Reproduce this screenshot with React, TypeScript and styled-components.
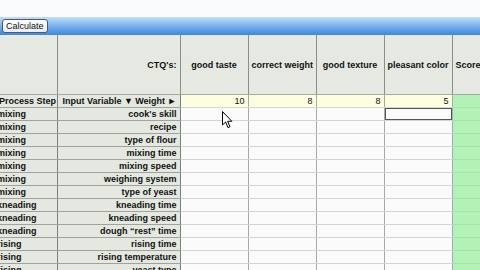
import React from "react";
import styled, { createGlobalStyle } from "styled-components";

const GlobalStyle = createGlobalStyle`
  html, body {
    margin: 0;
    padding: 0;
    width: 480px;
    height: 270px;
    overflow: hidden;
    background: #fafbfd;
    font-family: "Liberation Sans", Arial, sans-serif;
  }
`;

const ctqs = [
  { name: "good taste", weight: 10 },
  { name: "correct weight", weight: 8 },
  { name: "good texture", weight: 8 },
  { name: "pleasant color", weight: 5 },
];

const rows = [
  ["mixing", "cook's skill"],
  ["mixing", "recipe"],
  ["mixing", "type of flour"],
  ["mixing", "mixing time"],
  ["mixing", "mixing speed"],
  ["mixing", "weighing system"],
  ["mixing", "type of yeast"],
  ["kneading", "kneading time"],
  ["kneading", "kneading speed"],
  ["kneading", "dough \u201crest\u201d time"],
  ["rising", "rising time"],
  ["rising", "rising temperature"],
  ["rising", "yeast type"],
];

const Page = styled.div`
  position: relative;
  width: 480px;
  height: 270px;
  overflow: hidden;
`;

const TopBlank = styled.div`
  height: 17px;
  background: #fafbfd;
`;

const Toolbar = styled.div`
  height: 18px;
  display: flex;
  align-items: center;
  padding-left: 2px;
  background: linear-gradient(#c4def8 0%, #7fb5ee 45%, #3a88de 100%);
`;

const CalcButton = styled.button`
  height: 14px;
  padding: 0 3px;
  margin: 0;
  font-family: "Liberation Sans", Arial, sans-serif;
  font-size: 9px;
  line-height: 12px;
  color: #111;
  background: linear-gradient(#ffffff, #e8ecf2);
  border: 1px solid #4a5a72;
  border-radius: 3px;
`;

const Sheet = styled.table`
  margin-left: -4px;
  border-collapse: collapse;
  table-layout: fixed;
  width: 520px;
  font-size: 9px;
  font-weight: bold;
  color: #111;
`;

const HeadCell = styled.th<{ $align?: string }>`
  height: 59px;
  padding: 0 3px;
  background: #e6e9e2;
  border-right: 1px solid #8a8f88;
  border-bottom: 1px solid #a6aaa2;
  text-align: ${(p) => p.$align || "center"};
  vertical-align: middle;
  font-weight: bold;
  white-space: nowrap;
  overflow: hidden;
`;

const LabelCell = styled.td<{ $align?: string; $indent?: number }>`
  height: 12px;
  padding: 0 3px 0 ${(p) => p.$indent ?? 3}px;
  background: #e4e8e0;
  border-right: 1px solid #7c807a;
  border-bottom: 1px solid #9ea39b;
  text-align: ${(p) => p.$align || "right"};
  white-space: nowrap;
  overflow: hidden;
  line-height: 12px;
`;

const SplitLabel = styled.div`
  display: flex;
  justify-content: space-between;
  padding-left: 2px;
`;

const WeightCell = styled.td`
  height: 12px;
  padding: 0 3px;
  background: #fdfde2;
  border-right: 1px solid #a8aaa4;
  border-bottom: 1px solid #d6d8cc;
  text-align: right;
  font-weight: normal;
  line-height: 12px;
`;

const DataCell = styled.td<{ $focused?: boolean }>`
  height: 12px;
  padding: 0;
  background: #fbfbfb;
  border-right: 1px solid #a8aaa8;
  border-bottom: 1px solid #d4d6d4;
  box-shadow: ${(p) => (p.$focused ? "inset 0 0 0 1px #555" : "none")};
`;

const ScoreCell = styled.td`
  height: 12px;
  padding: 0;
  background: #b3f2b6;
  border-bottom: 1px solid #a8e0aa;
`;

const Cursor = styled.svg`
  position: absolute;
  left: 222px;
  top: 111px;
`;

export default function App() {
  return (
    <Page>
      <GlobalStyle />
      <TopBlank />
      <Toolbar>
        <CalcButton>Calculate</CalcButton>
      </Toolbar>
      <Sheet>
        <colgroup>
          <col style={{ width: 61 }} />
          <col style={{ width: 123 }} />
          {ctqs.map((c) => (
            <col key={c.name} style={{ width: 68 }} />
          ))}
          <col style={{ width: 64 }} />
        </colgroup>
        <thead>
          <tr>
            <HeadCell />
            <HeadCell $align="right">CTQ's:</HeadCell>
            {ctqs.map((c) => (
              <HeadCell key={c.name}>{c.name}</HeadCell>
            ))}
            <HeadCell $align="left">Score</HeadCell>
          </tr>
        </thead>
        <tbody>
          <tr>
            <LabelCell $align="left">Process Step</LabelCell>
            <LabelCell>
              <SplitLabel>
                <span>Input Variable ▼</span>
                <span>Weight ►</span>
              </SplitLabel>
            </LabelCell>
            {ctqs.map((c) => (
              <WeightCell key={c.name}>{c.weight}</WeightCell>
            ))}
            <ScoreCell />
          </tr>
          {rows.map(([step, variable], i) => (
            <tr key={variable}>
              <LabelCell $align="left" $indent={1}>
                {step}
              </LabelCell>
              <LabelCell>{variable}</LabelCell>
              {ctqs.map((c, j) => (
                <DataCell key={c.name} $focused={i === 0 && j === 3} />
              ))}
              <ScoreCell />
            </tr>
          ))}
        </tbody>
      </Sheet>
      <Cursor width="11" height="18" viewBox="0 0 11 18">
        <path
          d="M0.5 0.5 L0.5 14 L3.6 11 L6 16.6 L8 15.7 L5.6 10.3 L9.8 10.3 Z"
          fill="#fff"
          stroke="#000"
          strokeWidth="1"
          strokeLinejoin="round"
        />
      </Cursor>
    </Page>
  );
}
